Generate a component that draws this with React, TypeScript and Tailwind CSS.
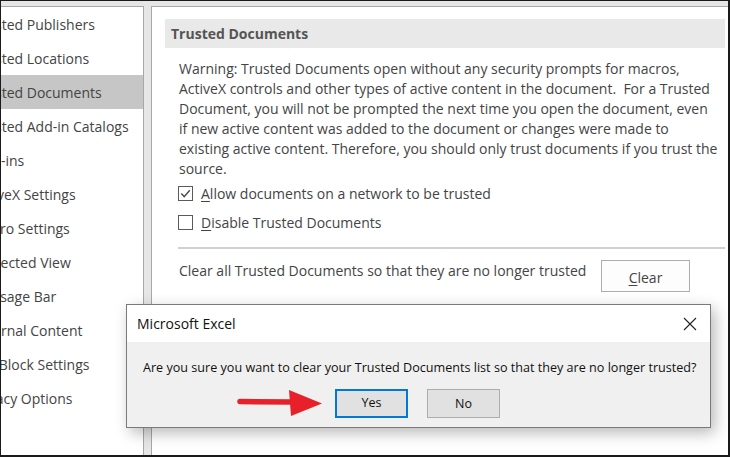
import React from "react";

const sideItems: { t: string; cls: string }[] = [
  { t: "Trusted Publishers", cls: "ml-[-28px]" },
  { t: "Trusted Locations", cls: "ml-[-28px]" },
  { t: "Trusted Documents", cls: "ml-[-28px]" },
  { t: "Trusted Add-in Catalogs", cls: "ml-[-28px]" },
  { t: "Add-ins", cls: "ml-[-26px]" },
  { t: "ActiveX Settings", cls: "ml-[-28px]" },
  { t: "Macro Settings", cls: "ml-[-28px]" },
  { t: "Protected View", cls: "ml-[-28px]" },
  { t: "Message Bar", cls: "ml-[-28px]" },
  { t: "External Content", cls: "ml-[-28px]" },
  { t: "File Block Settings", cls: "ml-[-28px]" },
  { t: "Privacy Options", cls: "ml-[-30px]" },
];

const paraLines = [
  "Warning: Trusted Documents open without any security prompts for macros,",
  "ActiveX controls and other types of active content in the document.  For a Trusted",
  "Document, you will not be prompted the next time you open the document, even",
  "if new active content was added to the document or changes were made to",
  "existing active content. Therefore, you should only trust documents if you trust the",
  "source.",
];

function CheckBox({ checked }: { checked: boolean }) {
  return (
    <div className="w-[15px] h-[15px] border border-[#5a5a5a] bg-white flex items-center justify-center shrink-0">
      {checked && (
        <svg width="13" height="13" viewBox="0 0 13 13">
          <path d="M2.3 6.6 L5.2 9.6 L10.8 3.2" fill="none" stroke="#4a4a4a" strokeWidth="1.4" />
        </svg>
      )}
    </div>
  );
}

export default function App() {
  return (
    <div className="w-[730px] h-[457px] border-t border-l border-r-2 border-b-2 border-[#1a1a1a] bg-[#e6e6e6] pt-[5px] flex gap-[7px] overflow-hidden relative font-['Open_Sans',sans-serif]">
      {/* Sidebar */}
      <div className="w-[143px] shrink-0 bg-white border-t border-r border-[#a8a8a8] overflow-hidden">
        <div>
          {sideItems.map((it, i) => (
            <div key={it.t} className={i === 2 ? "bg-[#c6c6c6]" : ""}>
              <div
                className={
                  "h-[34px] flex items-center whitespace-nowrap text-[14px] text-[#444] " + it.cls
                }
              >
                {it.t}
              </div>
            </div>
          ))}
        </div>
      </div>

      {/* Main panel */}
      <div className="flex-1 bg-white border-t border-l border-[#a8a8a8] pt-[12px] pl-[13px] pr-[3px]">
        <div className="h-[29px] bg-[#e9e9e9] flex items-center pl-[6px] font-bold text-[14px] text-[#555]">
          Trusted Documents
        </div>
        <div className="ml-[13px] mt-[11px] text-[#444] text-[14px]">
          <div className="pl-[1px] leading-[20px]">
            {paraLines.map((l) => (
              <div key={l} className="whitespace-pre">
                {l}
              </div>
            ))}
          </div>
          <div className="h-[29px] flex items-center gap-[8px]">
            <CheckBox checked />
            <span className="whitespace-nowrap">
              <span className="underline underline-offset-2">A</span>llow documents on a network to be trusted
            </span>
          </div>
          <div className="h-[28px] flex items-center gap-[8px]">
            <CheckBox checked={false} />
            <span className="whitespace-nowrap">
              <span className="underline underline-offset-2">D</span>isable Trusted Documents
            </span>
          </div>
          <div className="mt-[11px] h-[2px] bg-[#d0d0d0]" />
          <div className="mt-[11px] flex items-start">
            <div className="w-[423px] pl-[1px] mt-[1px] leading-[20px] whitespace-nowrap">
              Clear all Trusted Documents so that they are no longer trusted
            </div>
            <div className="w-[89px] h-[32px] border border-[#adadad] bg-[#fdfdfd] flex items-center justify-center pt-[2px]">
              <span>
                <span className="underline underline-offset-2">C</span>lear
              </span>
            </div>
          </div>
        </div>
      </div>

      {/* Dialog */}
      <div className="absolute left-[125px] top-[303px] w-[585px] h-[124px] border border-[#7a7a7a] bg-[#f0f0f0] shadow-[4px_5px_14px_rgba(0,0,0,0.28)] flex flex-col">
        <div className="h-[37px] bg-white flex items-center justify-between pl-[10px] pr-[13px] shrink-0">
          <span className="text-[14px] text-[#111]">Microsoft Excel</span>
          <svg width="14" height="14" viewBox="0 0 14 14">
            <path d="M1 1 L13 13 M13 1 L1 13" stroke="#222" strokeWidth="1.1" fill="none" />
          </svg>
        </div>
        <div className="pt-[16px] pl-[16px] text-[12.6px] leading-[20px] text-[#111] whitespace-nowrap">
          Are you sure you want to clear your Trusted Documents list so that they are no longer trusted?
        </div>
        <div className="mt-[11px] pl-[208px] flex gap-[19px]">
          <div className="w-[73px] h-[29px] border-2 border-[#0078d7] bg-[#e1e1e1] flex items-center justify-center text-[12.5px] text-[#111]">
            Yes
          </div>
          <div className="w-[73px] h-[29px] border border-[#adadad] bg-[#e1e1e1] flex items-center justify-center text-[12.5px] text-[#111] pt-[2px]">
            No
          </div>
        </div>
      </div>

      {/* Red arrow annotation */}
      <svg
        className="absolute left-[229px] top-[384px]"
        width="96"
        height="36"
        viewBox="0 0 96 36"
      >
        <path d="M10 16.5 L62 17" stroke="#e8202a" strokeWidth="5.5" strokeLinecap="round" fill="none" />
        <path d="M59 5 L92 18.5 L61 31 Z" fill="#e8202a" />
      </svg>
    </div>
  );
}
